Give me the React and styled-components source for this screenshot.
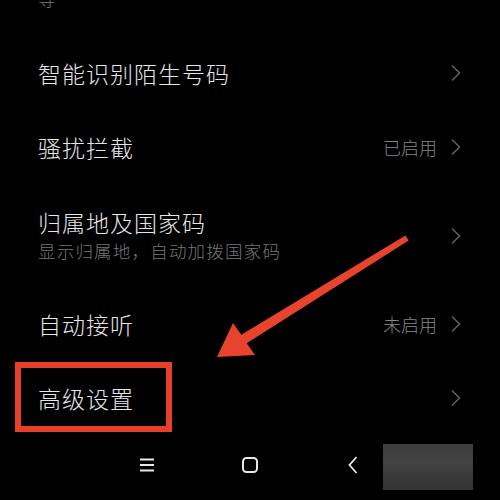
import React from "react";
import styled, { createGlobalStyle } from "styled-components";

const GlobalStyle = createGlobalStyle`
  html, body {
    margin: 0;
    padding: 0;
    background: #000;
  }
  body {
    font-family: "Noto Sans CJK SC", "Noto Sans", sans-serif;
    font-weight: 300;
  }
`;

const Screen = styled.div`
  position: relative;
  width: 500px;
  height: 500px;
  overflow: hidden;
  background: #000;
  display: flex;
  flex-direction: column;
`;

const Clipped = styled.div`
  height: 36px;
  flex: none;
  overflow: hidden;
  padding-left: 38px;
`;

const Hint = styled.div`
  margin-top: -13px;
  font-size: 17px;
  line-height: 24px;
  color: #7c7c7c;
`;

const Row = styled.div`
  flex: none;
  height: ${(p) => (p.tall ? 103 : 74)}px;
  display: flex;
  align-items: center;
  padding: 0 38px;
`;

const Texts = styled.div`
  flex: 1;
  display: flex;
  flex-direction: column;
  gap: 3px;
`;

const Title = styled.div`
  font-size: 23px;
  line-height: 28px;
  letter-spacing: 1px;
  color: #e6e6e6;
`;

const Sub = styled.div`
  font-size: 17.5px;
  line-height: 24px;
  letter-spacing: 1.2px;
  color: #777;
`;

const Value = styled.span`
  font-size: 18px;
  color: #858585;
  margin-right: 13px;
`;

const Nav = styled.div`
  flex: 1;
  display: flex;
  align-items: center;
  padding-left: 127px;
  gap: 63px;
  padding-bottom: 6px;
`;

const NavSlot = styled.div`
  width: 40px;
  display: flex;
  justify-content: center;
`;

const Blur = styled.div`
  position: absolute;
  left: 383px;
  top: 444px;
  width: 90px;
  height: 46px;
  background: linear-gradient(180deg, #3d3d3d 0%, #444 40%, #393939 70%, #353535 100%);
  filter: blur(0.6px);
`;

const Highlight = styled.div`
  position: absolute;
  left: 15px;
  top: 362px;
  width: 157px;
  height: 70px;
  box-sizing: border-box;
  border: 6px solid #e5402a;
`;

const Overlay = styled.svg`
  position: absolute;
  left: 0;
  top: 0;
  pointer-events: none;
`;

const Chevron = () => (
  <svg width="12" height="18" viewBox="0 0 12 18">
    <path d="M2 1.5 L9.5 9 L2 16.5" fill="none" stroke="#5e5e5e" strokeWidth="1.6" />
  </svg>
);

const items = [
  { title: "智能识别陌生号码" },
  { title: "骚扰拦截", value: "已启用" },
  { title: "归属地及国家码", sub: "显示归属地，自动加拨国家码", tall: true },
  { title: "自动接听", value: "未启用" },
  { title: "高级设置" },
];

export default function App() {
  return (
    <Screen>
      <GlobalStyle />
      <Clipped>
        <Hint>等</Hint>
      </Clipped>
      {items.map((it) => (
        <Row key={it.title} tall={it.tall}>
          <Texts>
            <Title>{it.title}</Title>
            {it.sub && <Sub>{it.sub}</Sub>}
          </Texts>
          {it.value && <Value>{it.value}</Value>}
          <Chevron />
        </Row>
      ))}
      <Nav>
        <NavSlot>
          <svg width="16" height="14" viewBox="0 0 16 14">
            <path d="M1 1.5 H15 M1 7 H15 M1 12.5 H15" stroke="#e8e8e8" strokeWidth="1.8" />
          </svg>
        </NavSlot>
        <NavSlot>
          <svg width="16" height="16" viewBox="0 0 16 16">
            <rect x="1" y="1" width="14" height="14" rx="3.5" fill="none" stroke="#e8e8e8" strokeWidth="2" />
          </svg>
        </NavSlot>
        <NavSlot>
          <svg width="10" height="18" viewBox="0 0 10 18">
            <path d="M8.5 1 L1.5 9 L8.5 17" fill="none" stroke="#e8e8e8" strokeWidth="1.8" />
          </svg>
        </NavSlot>
      </Nav>
      <Blur />
      <Highlight />
      <Overlay width="500" height="500" viewBox="0 0 500 500">
        <polygon
          points="405.4,235.5 241.3,334.8 233,323 217,357 255,355 246.7,343.2 408.6,240.5"
          fill="#e8432d"
        />
      </Overlay>
    </Screen>
  );
}
